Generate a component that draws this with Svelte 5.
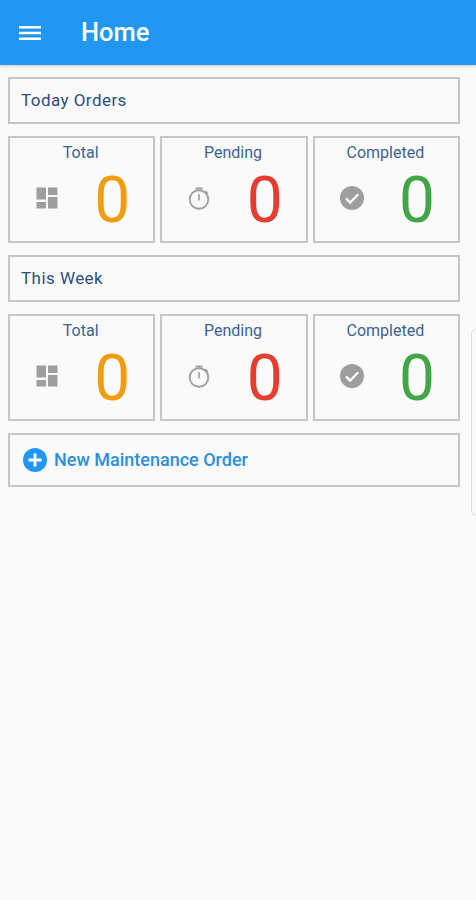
<script>
	const stats = [
		{ label: 'Total', kind: 'total' },
		{ label: 'Pending', kind: 'pending' },
		{ label: 'Completed', kind: 'completed' }
	];
	const sections = ['Today Orders', 'This Week'];
</script>

<div class="page">
	<header class="topbar">
		<svg class="menu" width="24" height="24" viewBox="0 0 24 24" aria-hidden="true">
			<path d="M1 5h22v2.4H1zM1 10.8h22v2.4H1zM1 16.6h22V19H1z" fill="#fff" />
		</svg>
		<h1>Home</h1>
	</header>

	<main class="content">
		{#each sections as title}
			<div class="box title">{title}</div>
			<div class="cards">
				{#each stats as stat}
					<div class="box card">
						<div class="label">{stat.label}</div>
						<div class="row">
							{#if stat.kind === 'total'}
								<svg class="icon" width="24" height="24" viewBox="0 0 24 24" aria-hidden="true">
									<path d="M1.5 1.5h9.5v12H1.5zM13 1.5h9.5v7.5H13zM1.5 16h9.5v6.5H1.5zM13 11h9.5v11.5H13z" fill="#9e9e9e" />
								</svg>
							{:else if stat.kind === 'pending'}
								<svg class="icon" width="24" height="24" viewBox="0 0 24 24" aria-hidden="true">
									<circle cx="12" cy="13.5" r="9.3" fill="none" stroke="#9e9e9e" stroke-width="1.9" />
									<path d="M8.5 1.5h7v2h-7zM11.2 8h1.6v6.5h-1.6zM18.6 4.6l2.6 2.5-1.3 1.3-2.6-2.5z" fill="#9e9e9e" />
								</svg>
							{:else}
								<svg class="icon" width="24" height="24" viewBox="0 0 24 24" aria-hidden="true">
									<circle cx="12" cy="12" r="12" fill="#9e9e9e" />
									<path d="M6 12.4l4.2 4.2 8-8.4" fill="none" stroke="#fff" stroke-width="2.2" />
								</svg>
							{/if}
							<span class="count {stat.kind}">0</span>
						</div>
					</div>
				{/each}
			</div>
		{/each}

		<div class="box action">
			<svg width="24" height="24" viewBox="0 0 24 24" aria-hidden="true">
				<circle cx="12" cy="12" r="12" fill="#2196f3" />
				<path d="M10.6 5.5h2.8v5.1h5.1v2.8h-5.1v5.1h-2.8v-5.1H5.5v-2.8h5.1z" fill="#fff" />
			</svg>
			<span>New Maintenance Order</span>
		</div>
	</main>

	<div class="edge"></div>
</div>

<style>
	:global(body) {
		background-color: #fafafa;
	}
	.page {
		position: relative;
		height: 900px;
		overflow: hidden;
		background-color: #fafafa;
		font-family: Roboto, 'Liberation Sans', sans-serif;
	}
	.topbar {
		display: flex;
		align-items: center;
		height: 65px;
		padding-left: 18px;
		background-color: #2196f3;
		box-shadow: 0 1px 3px rgba(0, 0, 0, 0.2);
		box-sizing: border-box;
	}
	.menu {
		flex: none;
	}
	.topbar h1 {
		margin: 0 0 2px 39px;
		color: #fff;
		font-size: 25.5px;
		font-weight: 500;
	}
	.content {
		display: flex;
		flex-direction: column;
		gap: 12px;
		padding: 12px 16px 0 8px;
	}
	.box {
		border: 2px solid #c6c6c6;
		box-sizing: border-box;
		background-color: #fafafa;
	}
	.title {
		display: flex;
		align-items: center;
		height: 47px;
		padding: 0 0 2px 11px;
		color: #2c4f7c;
		font-size: 17px;
		letter-spacing: 0.45px;
	}
	.cards {
		display: grid;
		grid-template-columns: repeat(3, 1fr);
		gap: 5px;
		height: 107px;
	}
	.card {
		padding: 5px 2px 0 0;
		text-align: center;
	}
	.label {
		color: #3f6290;
		font-size: 16px;
		line-height: 20px;
	}
	.row {
		display: flex;
		align-items: center;
		justify-content: space-between;
		padding: 0 21px 0 25px;
		margin-top: 2px;
	}
	.icon {
		flex: none;
		margin-top: -2px;
	}
	.count {
		padding-top: 4px;
		font-size: 64px;
		line-height: 64px;
		font-weight: 400;
	}
	.count.total {
		color: #f39c12;
	}
	.count.pending {
		color: #e53e30;
	}
	.count.completed {
		color: #43a547;
	}
	.action {
		display: flex;
		align-items: center;
		gap: 7px;
		height: 54px;
		padding: 0 0 1px 13px;
		color: #2d8fd8;
		font-size: 18px;
		font-weight: 500;
	}
	.edge {
		position: absolute;
		left: 471px;
		top: 328px;
		width: 12px;
		height: 188px;
		border: 1px solid #dcdcdc;
		border-radius: 6px;
		box-sizing: border-box;
	}
</style>
